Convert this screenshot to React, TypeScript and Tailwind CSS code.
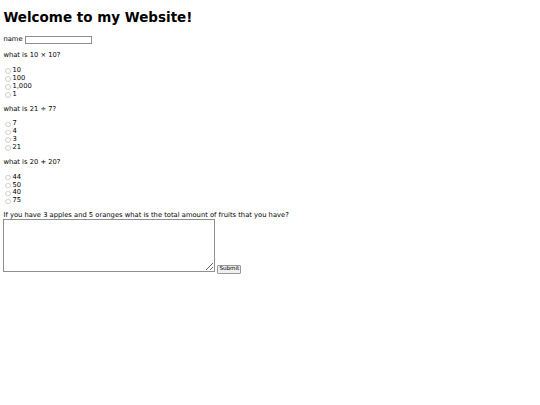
const questions = [
  { q: "what is 10 × 10?", name: "q1", options: ["10", "100", "1,000", "1"] },
  { q: "what is 21 ÷ 7?", name: "q2", options: ["7", "4", "3", "21"] },
  { q: "what is 20 + 20?", name: "q3", options: ["44", "50", "40", "75"] },
];

function Radio({ name, label }: { name: string; label: string }) {
  return (
    <label className="flex h-[7.9px] items-center">
      <input
        type="radio"
        name={name}
        className="ml-[2px] mr-[1.5px] h-[5.5px] w-[5.5px] appearance-none rounded-full border border-[#cdcdcd] bg-white"
      />
      <span>{label}</span>
    </label>
  );
}

export default function App() {
  return (
    <div className="min-h-[405px] bg-white px-[3.4px] text-[6.75px] leading-[7.9px] text-black [font-family:'DejaVu_Sans',Verdana,sans-serif]">
      <h1 className="pt-[10px] pb-[8.8px] text-[13.5px] leading-[15.7px] font-bold">
        Welcome to my Website!
      </h1>

      <form className="flex flex-col">
        <div className="flex h-[11px] items-center">
          <span>name</span>
          <input
            type="text"
            className="ml-[2px] h-[8.5px] w-[67px] border border-[#8f8f8f] bg-white"
          />
        </div>

        {questions.map((item) => (
          <div key={item.name} className="flex flex-col">
            <p className="my-[6.9px]">{item.q}</p>
            {item.options.map((opt) => (
              <Radio key={opt} name={item.name} label={opt} />
            ))}
          </div>
        ))}

        <p className="mt-[7px] leading-[6.5px]">
          If you have 3 apples and 5 oranges what is the total amount of fruits that you have?
        </p>
        <div className="flex items-end">
          <textarea className="h-[53px] w-[212px] resize border border-[#8f8f8f] bg-white" />
          <button
            type="submit"
            className="mb-[-2px] ml-[2px] h-[9px] w-[24px] rounded-[1px] border border-[#9a9a9a] bg-[#efefef] text-[5.6px] leading-none"
          >
            Submit
          </button>
        </div>
      </form>
    </div>
  );
}
